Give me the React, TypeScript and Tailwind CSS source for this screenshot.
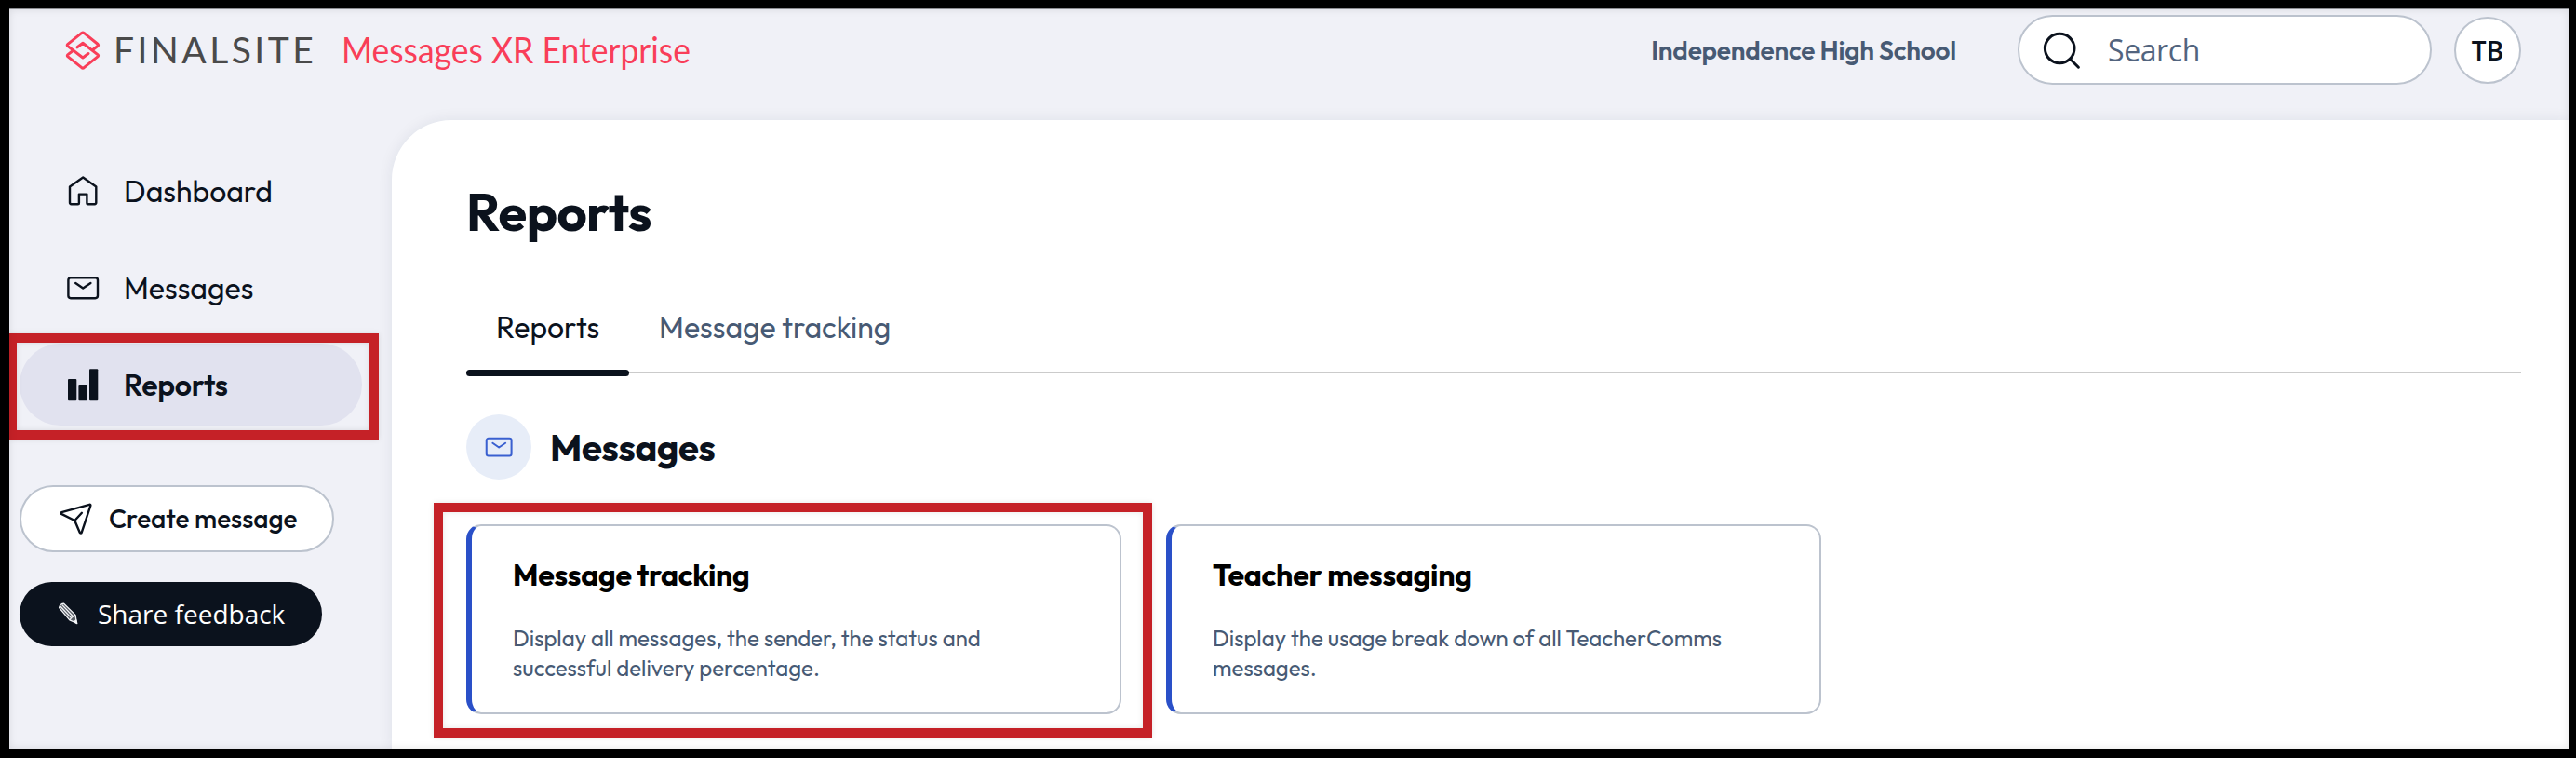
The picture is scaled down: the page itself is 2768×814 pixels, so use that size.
import type { ReactNode } from "react";

const navItems = [
  { label: "Dashboard", icon: <HomeIcon />, active: false },
  { label: "Messages", icon: <EnvelopeIcon className="size-10" />, active: false },
  { label: "Reports", icon: <BarsIcon />, active: true },
];

const reportCards = [
  {
    title: "Message tracking",
    description: "Display all messages, the sender, the status and successful delivery percentage.",
    highlighted: true,
  },
  {
    title: "Teacher messaging",
    description: "Display the usage break down of all TeacherComms messages.",
    highlighted: false,
  },
];

function LogoMark() {
  return (
    <svg className="h-11 w-10 shrink-0" viewBox="0 0 40 44" fill="none" stroke="#f93e59" strokeWidth="3" strokeLinecap="round" strokeLinejoin="round">
      <path d="M31 21.3l5.2-4a1.2 1.2 0 0 0 0-1.8L21.2 3.4a2 2 0 0 0-2.4 0L3.6 15.6a1.2 1.2 0 0 0 0 1.8L20 30l6-4.5" />
      <path d="M9 22.8l-5.3 4.1a1.2 1.2 0 0 0 0 1.8l15.1 12a2 2 0 0 0 2.4 0l15-12a1.2 1.2 0 0 0 0-1.8L20 14.2l-6 4.6" />
    </svg>
  );
}

function HomeIcon() {
  return (
    <svg className="size-10" viewBox="0 0 40 40" fill="none" stroke="currentColor" strokeWidth="2.4" strokeLinejoin="round">
      <path d="M20.2 5.4L6 15.4V32.6c0 1 .6 1.6 1.6 1.6h7c.8 0 1.3-.5 1.3-1.3v-9.3h8.5v9.3c0 .8.5 1.3 1.3 1.3h7c1 0 1.6-.6 1.6-1.6V15.4z" />
    </svg>
  );
}

function EnvelopeIcon({ className }: { className: string }) {
  return (
    <svg className={className} viewBox="0 0 40 40" fill="none" stroke="currentColor" strokeWidth="2.4" strokeLinecap="round" strokeLinejoin="round">
      <rect x="4.4" y="9.2" width="31.6" height="22" rx="2.6" />
      <path d="M12.2 15l8 5.6 8.2-5.6" />
    </svg>
  );
}

function BarsIcon() {
  return (
    <svg className="size-10" viewBox="0 0 40 40" fill="currentColor">
      <rect x="4" y="14" width="9.3" height="23.2" rx="1" />
      <rect x="15.4" y="20" width="9.3" height="17.2" rx="1" />
      <rect x="27" y="3.2" width="9.3" height="34" rx="1" />
    </svg>
  );
}

function PlaneIcon() {
  return (
    <svg className="size-10" viewBox="0 0 40 40" fill="none" stroke="currentColor" strokeWidth="2.4" strokeLinecap="round" strokeLinejoin="round">
      <path d="M35.2 4.8L5.2 13.2c-1 .3-1 1.3-.2 1.7L19.3 22l5.4 12.8c.4 1 1.7 1 2 0l9.6-28.6c.3-.9-.3-1.6-1.1-1.4z" />
      <path d="M19.3 22l7.6-8.2" />
    </svg>
  );
}

function PencilIcon() {
  return (
    <svg className="h-7 w-6" viewBox="0 0 24 28" fill="none" stroke="#f3f4f7" strokeWidth="1.3" strokeLinejoin="round">
      <path d="M2.6 7.6c.4-2.4 2.6-4.4 5-4.4L20 15.4l1.4 8.8-7.6-3.4z" fill="#5b6068" />
      <path d="M4 6.2l11.6 12.4M5.6 4.4l12 12.6" />
      <path d="M13.8 20.8l1.8-2.2 2-1.6 2.4-1.6" />
      <path d="M18.6 23l2.2-2.2 1 3.8z" fill="#fff" />
    </svg>
  );
}

function SearchIcon() {
  return (
    <svg className="size-12" viewBox="0 0 48 48" fill="none" stroke="#0b121d" strokeWidth="3" strokeLinecap="round">
      <circle cx="23.2" cy="22" r="15.8" />
      <path d="M34.8 33.8l8.6 8.4" />
    </svg>
  );
}

// Red annotation frame drawn over whatever it wraps
function Callout({ className }: { className: string }) {
  return <div className={"pointer-events-none absolute border-[10px] border-[#c52127] shadow-[0_0_6px_rgba(0,0,0,0.1),inset_0_0_6px_rgba(0,0,0,0.1)] " + className} />;
}

function NavItem({ icon, label, active }: { icon: ReactNode; label: string; active: boolean }) {
  return (
    <a className={"relative flex h-[88px] w-[368px] items-center gap-6 rounded-full pl-12 text-[32px] " + (active ? "bg-[#e1e2ef] font-semibold tracking-[-0.3px]" : "font-normal")}>
      {icon}
      <span>{label}</span>
      {active && <Callout className="-top-[11px] -left-[11px] h-[114px] w-[397px] border-l-8" />}
    </a>
  );
}

function Header() {
  return (
    <header className="flex h-[87px] shrink-0 items-center pr-[51px] pl-[59px]">
      <LogoMark />
      <span className="ml-[13px] w-[245px] font-['Lato'] text-[39px] tracking-[3.5px] text-[#4a4a4a]">FINALSITE</span>
      <span className="origin-left scale-x-[0.935] font-['Lato'] text-[38px] text-[#f93e59]">Messages XR Enterprise</span>
      <span className="ml-auto text-[28px] font-semibold tracking-[-0.2px] text-[#475a74]">Independence High School</span>
      <div className="ml-[66px] flex h-[75px] w-[445px] items-center gap-[27px] rounded-full border-2 border-[#bcc3ce] bg-white pl-5">
        <SearchIcon />
        <span className="font-['Open_Sans','Noto_Sans',sans-serif] text-[32px] tracking-[-0.4px] text-[#52647e]">Search</span>
      </div>
      <div className="ml-6 flex size-[72px] items-center justify-center rounded-full border-2 border-[#bcc3ce] bg-white font-['Open_Sans','Noto_Sans',sans-serif] text-[28px] font-semibold">
        TB
      </div>
    </header>
  );
}

function Sidebar() {
  return (
    <aside className="flex w-[411px] shrink-0 flex-col pt-8 pl-[11px]">
      <nav className="flex flex-col gap-4">
        {navItems.map((item) => (
          <NavItem key={item.label} {...item} />
        ))}
      </nav>
      <button className="mt-16 flex h-[72px] w-[338px] items-center gap-4 rounded-full border-2 border-[#bcc3ce] bg-white pl-[38px] text-[28px] font-medium">
        <PlaneIcon />
        Create message
      </button>
      <button className="mt-8 flex h-[69px] w-[325px] items-center gap-5 rounded-full bg-[#0b121d] pb-0.5 pl-10 font-['Open_Sans','Noto_Sans',sans-serif] text-[28px] font-medium text-white">
        <PencilIcon />
        Share feedback
      </button>
    </aside>
  );
}

function ReportCard({ title, description, highlighted }: { title: string; description: string; highlighted: boolean }) {
  return (
    <div className="relative">
      <article className="h-[204px] w-[704px] rounded-2xl border-2 border-l-[6px] border-[#bcc3ce] border-l-[#2a50c8] px-11 py-8">
        <h3 className="text-[32px] leading-10 font-bold tracking-[-0.27px] text-black">{title}</h3>
        <p className="mt-8 text-[24px] leading-8 text-[#475a74]">{description}</p>
      </article>
      {highlighted && <Callout className="-top-[23px] -left-[35px] h-[252px] w-[772px]" />}
    </div>
  );
}

export default function App() {
  return (
    <div className="h-[814px] w-full border-t-[9px] border-r-8 border-b-10 border-l-10 border-black bg-[#f0f1f7] font-['Outfit','Lato',sans-serif] text-[#0b121d]">
      <div className="relative flex h-full flex-col overflow-hidden border-t border-[#8d8e93]">
        <Header />
        <div className="mt-8 flex grow">
          <Sidebar />
          <main className="grow rounded-tl-[64px] bg-white pt-[63px] pr-[51px] pl-20 shadow-[0_0_16px_rgba(30,36,70,0.08)]">
            <h1 className="text-[56px] leading-[72px] font-bold tracking-[-0.55px]">Reports</h1>

            <div className="mt-10 flex h-[97px] border-b-2 border-[#cbcbcb] text-[32px]">
              <div className="relative flex items-center px-8 pb-0.5">
                Reports
                <div className="absolute inset-x-0 -bottom-[5px] h-[7px] rounded-full bg-[#0b121d]" />
              </div>
              <div className="flex items-center px-8 pb-0.5 text-[#475a74]">Message tracking</div>
            </div>

            <div className="mt-11 flex items-center gap-5">
              <div className="flex size-[70px] items-center justify-center rounded-full bg-[#e7edf8] text-[#3a60d0]">
                <EnvelopeIcon className="size-[34px]" />
              </div>
              <h2 className="text-[40px] leading-[70px] font-bold tracking-[-0.35px]">Messages</h2>
            </div>

            <div className="mt-12 flex gap-12">
              {reportCards.map((card) => (
                <ReportCard key={card.title} {...card} />
              ))}
            </div>
          </main>
        </div>
        {/* soft inner edge of the window frame */}
        <div className="pointer-events-none absolute inset-0 shadow-[inset_0_0_8px_rgba(0,0,0,0.1)]" />
      </div>
    </div>
  );
}
